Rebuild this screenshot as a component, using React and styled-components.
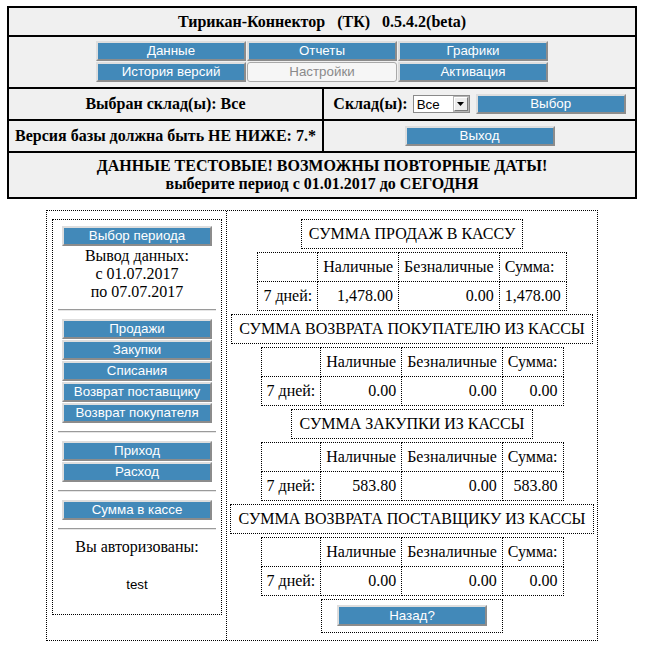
import React from "react";
import styled, { createGlobalStyle } from "styled-components";

const GlobalStyle = createGlobalStyle`
  html, body { margin: 0; padding: 0; background: #fff; }
  body {
    font-family: "Liberation Serif", "Times New Roman", serif;
    font-size: 16px;
    color: #000;
  }
`;

const Page = styled.div`
  width: 630px;
  padding: 6px 0 10px 7px;
`;

/* ---------- header panel ---------- */

const Panel = styled.div`
  box-sizing: border-box;
  border: 2px solid #000;
  background: #f0f0f0;
  font-weight: bold;
`;

const TitleRow = styled.div`
  height: 27px;
  line-height: 27px;
  text-align: center;
  white-space: pre;
`;

const NavRow = styled.div`
  border-top: 2px solid #000;
  padding: 4px 0 5px;
  display: grid;
  grid-template-columns: repeat(3, 150px);
  gap: 1px;
  justify-content: center;
`;

const SplitRow = styled.div`
  border-top: 2px solid #000;
  display: grid;
  grid-template-columns: 313px 1fr;
  height: 30px;
`;

const SplitCell = styled.div`
  display: flex;
  align-items: center;
  justify-content: center;
  border-left: ${(p) => (p.$divided ? "2px solid #000" : "none")};
`;

const NoticeRow = styled.div`
  border-top: 2px solid #000;
  height: 44px;
  display: flex;
  flex-direction: column;
  justify-content: center;
  align-items: center;
  line-height: 18px;
`;

const Button = styled.button`
  box-sizing: border-box;
  width: 150px;
  height: ${(p) => p.$h || 20}px;
  margin: 0;
  padding: 0;
  background: #4289b9;
  color: #fff;
  font-family: "Liberation Sans", Arial, sans-serif;
  font-size: 13.333px;
  font-weight: normal;
  line-height: 14px;
  border: 2px solid;
  border-color: #dedede #8c8c8c #8c8c8c #dedede;
  cursor: pointer;
`;

const DisabledButton = styled.button`
  box-sizing: border-box;
  width: 150px;
  height: 20px;
  margin: 0;
  padding: 0;
  background: #f6f6f6;
  color: #8a8a8a;
  font-family: "Liberation Sans", Arial, sans-serif;
  font-size: 13.333px;
  font-weight: normal;
  line-height: 14px;
  border: 1px solid #a9a9a9;
  border-radius: 3px;
`;

const StoreLabel = styled.span`
  margin-right: 5px;
`;

const Select = styled.div`
  box-sizing: border-box;
  width: 57px;
  height: 18px;
  background: #fff;
  border: 1px solid #8a8a8a;
  display: flex;
  align-items: center;
  justify-content: space-between;
  padding: 0 1px 0 3px;
  font-family: "Liberation Sans", Arial, sans-serif;
  font-size: 13.333px;
  font-weight: normal;
  margin-right: 6px;
`;

const SelectArrow = styled.span`
  box-sizing: border-box;
  width: 14px;
  height: 14px;
  background: #ececec;
  border: 1px solid;
  border-color: #fff #7a7a7a #7a7a7a #fff;
  outline: 1px solid #b5b5b5;
  display: flex;
  align-items: center;
  justify-content: center;
`;

/* ---------- report area ---------- */

const Report = styled.div`
  width: 552px;
  box-sizing: border-box;
  margin: 11px 0 0 39px;
  border: 1px dotted #000;
  display: flex;
`;

const SideCell = styled.div`
  width: 180px;
  box-sizing: border-box;
  padding: 8px 5px 0 5px;
  border-right: 1px dotted #000;
`;

const SideBox = styled.div`
  box-sizing: border-box;
  width: 170px;
  border: 1px dotted #000;
  padding: 6px 0 20px;
  display: flex;
  flex-direction: column;
  align-items: stretch;
`;

const SideGroup = styled.div`
  display: flex;
  flex-direction: column;
  align-items: center;
  gap: 1px;
  line-height: 18px;
  text-align: center;
`;

const Divider = styled.hr`
  margin: 8px 5px;
  height: 0;
  border: 0;
  border-top: 1px solid #9a9a9a;
  border-bottom: 1px solid #e6e6e6;
`;

const Login = styled.div`
  margin-top: 19px;
  font-family: "Liberation Sans", Arial, sans-serif;
  font-size: 13.333px;
  line-height: 18px;
`;

const MainCell = styled.div`
  flex: 1;
  padding: 8px 0 7px;
  display: flex;
  flex-direction: column;
  align-items: center;
  gap: 3px;
`;

const Caption = styled.div`
  border: 1px dotted #000;
  padding: 5px 7px;
  line-height: 18px;
`;

const Sheet = styled.table`
  border-collapse: collapse;
  border: 1px dotted #000;
`;

const Cell = styled.td`
  border: 1px dotted #000;
  padding: 5px;
  line-height: 18px;
  text-align: ${(p) => p.$align || "left"};
  white-space: nowrap;
`;

const BackBox = styled.div`
  border: 1px dotted #000;
  padding: 5px 15px 6px;
  display: flex;
`;

/* ---------- data ---------- */

const navButtons = [
  { label: "Данные" },
  { label: "Отчеты" },
  { label: "Графики" },
  { label: "История версий" },
  { label: "Настройки", disabled: true },
  { label: "Активация" },
];

const reports = [
  { title: "СУММА ПРОДАЖ В КАССУ", cash: "1,478.00", card: "0.00", total: "1,478.00" },
  { title: "СУММА ВОЗВРАТА ПОКУПАТЕЛЮ ИЗ КАССЫ", cash: "0.00", card: "0.00", total: "0.00" },
  { title: "СУММА ЗАКУПКИ ИЗ КАССЫ", cash: "583.80", card: "0.00", total: "583.80" },
  { title: "СУММА ВОЗВРАТА ПОСТАВЩИКУ ИЗ КАССЫ", cash: "0.00", card: "0.00", total: "0.00" },
];

function ReportTable({ cash, card, total }) {
  return (
    <Sheet>
      <tbody>
        <tr>
          <Cell />
          <Cell>Наличные</Cell>
          <Cell>Безналичные</Cell>
          <Cell>Сумма:</Cell>
        </tr>
        <tr>
          <Cell $align="right">7 дней:</Cell>
          <Cell $align="right">{cash}</Cell>
          <Cell $align="right">{card}</Cell>
          <Cell $align="right">{total}</Cell>
        </tr>
      </tbody>
    </Sheet>
  );
}

export default function App() {
  return (
    <>
      <GlobalStyle />
      <Page>
        <Panel>
          <TitleRow>{"Тирикан-Коннектор\u00a0\u00a0 (ТК)\u00a0\u00a0 0.5.4.2(beta)"}</TitleRow>
          <NavRow>
            {navButtons.map((b) =>
              b.disabled ? (
                <DisabledButton key={b.label} disabled>
                  {b.label}
                </DisabledButton>
              ) : (
                <Button key={b.label}>{b.label}</Button>
              )
            )}
          </NavRow>
          <SplitRow>
            <SplitCell>Выбран склад(ы): Все</SplitCell>
            <SplitCell $divided>
              <StoreLabel>Склад(ы):</StoreLabel>
              <Select>
                <span>Все</span>
                <SelectArrow>
                  <svg width="7" height="4" viewBox="0 0 7 4">
                    <path d="M0 0H7L3.5 4Z" fill="#000" />
                  </svg>
                </SelectArrow>
              </Select>
              <Button>Выбор</Button>
            </SplitCell>
          </SplitRow>
          <SplitRow>
            <SplitCell>Версия базы должна быть НЕ НИЖЕ: 7.*</SplitCell>
            <SplitCell $divided>
              <Button>Выход</Button>
            </SplitCell>
          </SplitRow>
          <NoticeRow>
            <div>ДАННЫЕ ТЕСТОВЫЕ! ВОЗМОЖНЫ ПОВТОРНЫЕ ДАТЫ!</div>
            <div>выберите период с 01.01.2017 до СЕГОДНЯ</div>
          </NoticeRow>
        </Panel>

        <Report>
          <SideCell>
            <SideBox>
              <SideGroup>
                <Button>Выбор периода</Button>
                <div>
                  Вывод данных:
                  <br />с 01.07.2017
                  <br />
                  по 07.07.2017
                </div>
              </SideGroup>
              <Divider />
              <SideGroup>
                <Button>Продажи</Button>
                <Button>Закупки</Button>
                <Button>Списания</Button>
                <Button>Возврат поставщику</Button>
                <Button>Возврат покупателя</Button>
              </SideGroup>
              <Divider />
              <SideGroup>
                <Button>Приход</Button>
                <Button>Расход</Button>
              </SideGroup>
              <Divider />
              <SideGroup>
                <Button>Сумма в кассе</Button>
              </SideGroup>
              <Divider />
              <SideGroup>
                <div>Вы авторизованы:</div>
                <Login>test</Login>
              </SideGroup>
            </SideBox>
          </SideCell>
          <MainCell>
            {reports.map((r) => (
              <React.Fragment key={r.title}>
                <Caption>{r.title}</Caption>
                <ReportTable {...r} />
              </React.Fragment>
            ))}
            <BackBox>
              <Button $h={21}>Назад?</Button>
            </BackBox>
          </MainCell>
        </Report>
      </Page>
    </>
  );
}
